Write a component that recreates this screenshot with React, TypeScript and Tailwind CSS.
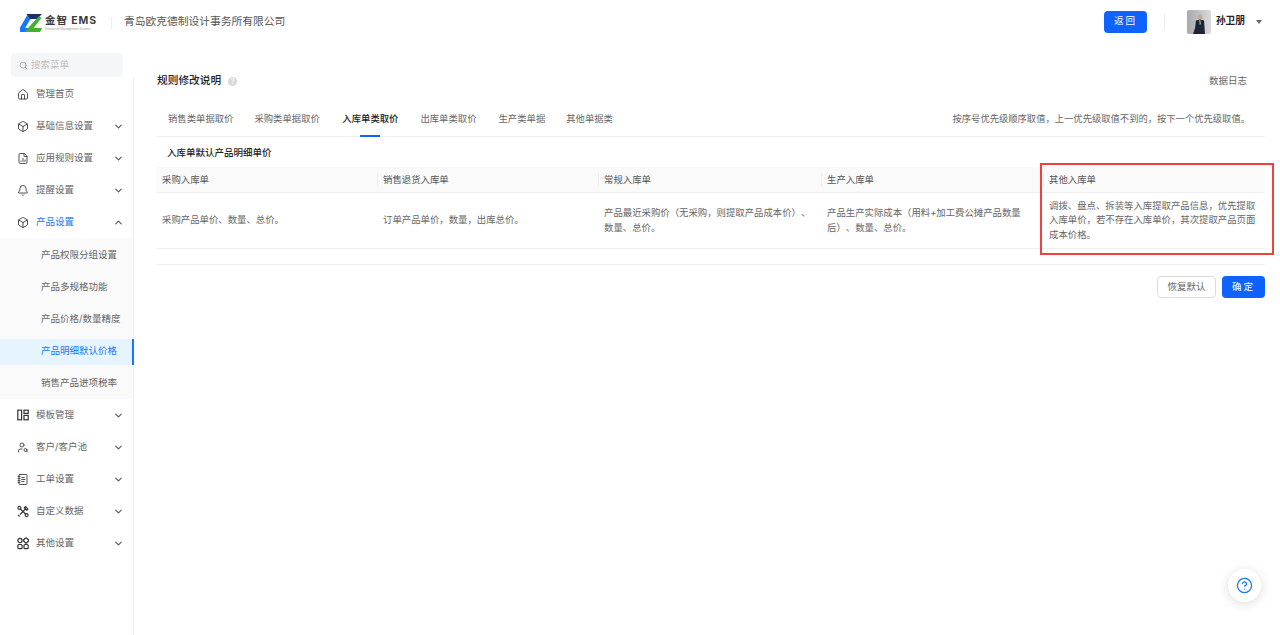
import React from "react";
import { House, Box, FileChartColumn, Bell, ChevronDown, ChevronUp, Search, CircleHelp, UserSearch, NotebookText } from "lucide-react";

const FONT = "font-['Inter','Noto_Sans_CJK_SC',sans-serif]";

function TemplateIcon() {
  return (
    <svg width="12" height="12" viewBox="0 0 12 12" fill="none" stroke="#333" strokeWidth="1.2">
      <rect x="0.8" y="1.2" width="3.8" height="9.6" />
      <rect x="7" y="1.2" width="4.2" height="3.2" />
      <rect x="7" y="6.4" width="4.2" height="4.4" />
    </svg>
  );
}
function CrossToolsIcon() {
  return (
    <svg width="13" height="13" viewBox="0 0 12 12" fill="none" stroke="#333" strokeWidth="1.1">
      <path d="M3 3l6 6M9 3L3 9" />
      <circle cx="2.4" cy="2.4" r="1.5" />
      <circle cx="9.6" cy="9.6" r="1.5" />
      <path d="M8.4 1l2.6 2.6-1.4 1.2L7.2 2.2z" />
      <path d="M1 9.4l1.6 1.6" />
    </svg>
  );
}
function GridIcon() {
  return (
    <svg width="13" height="13" viewBox="0 0 12 12" fill="none" stroke="#333" strokeWidth="1.2">
      <circle cx="3" cy="3" r="2.1" />
      <rect x="7" y="0.9" width="4.2" height="4.2" rx="1" transform="rotate(45 9.1 3)" />
      <rect x="0.9" y="7" width="4.2" height="4.2" rx="1" />
      <rect x="7" y="7" width="4.2" height="4.2" rx="1" />
    </svg>
  );
}
function Logo() {
  return (
    <svg width="22" height="18" viewBox="0 0 22 18">
      <path d="M6.5 0H22L17 5H9.5z" fill="#17306e" />
      <path d="M7 1.5L0 13.5V18h7l3-4H5.2L10.5 5z" fill="#1677ff" />
      <path d="M19 2L8 14l-3 4h15l2-4H13.5L21.5 4z" fill="#45b02a" />
    </svg>
  );
}
function Avatar() {
  return (
    <svg width="24" height="24" viewBox="0 0 24 24">
      <defs>
        <linearGradient id="avatarBg" x1="0" y1="0" x2="1" y2="0">
          <stop offset="0" stopColor="#a8a9ad" />
          <stop offset="1" stopColor="#d9dadc" />
        </linearGradient>
      </defs>
      <rect width="24" height="24" rx="2" fill="url(#avatarBg)" />
      <circle cx="13" cy="7" r="2.4" fill="#c9a992" />
      <path d="M9 10.5L13 9.5L17 10.5L18 24H6L8 18z" fill="#1d2433" />
      <path d="M12.4 10l.8 0 .5 4-.9 1z" fill="#e8e8e8" />
    </svg>
  );
}

type Item = { label: string; icon: React.ReactNode; chevron?: boolean; open?: boolean };
const iconProps = { size: 13, strokeWidth: 1.7, color: "#333" };

const beforeItems: Item[] = [
  { label: "管理首页", icon: <House {...iconProps} /> },
  { label: "基础信息设置", icon: <Box {...iconProps} />, chevron: true },
  { label: "应用规则设置", icon: <FileChartColumn {...iconProps} />, chevron: true },
  { label: "提醒设置", icon: <Bell {...iconProps} />, chevron: true },
  { label: "产品设置", icon: <Box {...iconProps} />, chevron: true, open: true },
];
const afterItems: Item[] = [
  { label: "模板管理", icon: <TemplateIcon />, chevron: true },
  { label: "客户/客户池", icon: <UserSearch {...iconProps} />, chevron: true },
  { label: "工单设置", icon: <NotebookText {...iconProps} />, chevron: true },
  { label: "自定义数据", icon: <CrossToolsIcon />, chevron: true },
  { label: "其他设置", icon: <GridIcon />, chevron: true },
];
const subItems = ["产品权限分组设置", "产品多规格功能", "产品价格/数量精度", "产品明细默认价格", "销售产品进项税率"];

function MenuRow({ item }: { item: Item }) {
  return (
    <div className="h-[32px] flex items-center pl-[17px] pr-[9px]">
      <span className="w-[12px] h-[12px] flex items-center justify-center shrink-0">{item.icon}</span>
      <span className={`ml-[7px] flex-1 text-[9.5px] ${item.open ? "text-[#1677ff]" : "text-[#666]"}`}>{item.label}</span>
      {item.chevron &&
        (item.open ? (
          <ChevronUp size={11} strokeWidth={2.4} color="#555" />
        ) : (
          <ChevronDown size={11} strokeWidth={2.4} color="#555" />
        ))}
    </div>
  );
}

const tabs = [
  { t: "销售类单据取价", c: "" },
  { t: "采购类单据取价", c: "ml-[21px]" },
  { t: "入库单类取价", c: "ml-[22.5px]" },
  { t: "出库单类取价", c: "ml-[22px]" },
  { t: "生产类单据", c: "ml-[22px]" },
  { t: "其他单据类", c: "ml-[21px]" },
];
const cols = [
  { w: "w-[221px]", head: "采购入库单", body: "采购产品单价、数量、总价。" },
  { w: "w-[221px]", head: "销售退货入库单", body: "订单产品单价，数量，出库总价。" },
  { w: "w-[223px]", head: "常规入库单", body: "产品最近采购价（无采购，则提取产品成本价）、数量、总价。" },
  { w: "w-[222px]", head: "生产入库单", body: "产品生产实际成本（用料+加工费公摊产品数量后）、数量、总价。" },
  { w: "flex-1", head: "其他入库单", body: "调拨、盘点、拆装等入库提取产品信息，优先提取入库单价，若不存在入库单价，其次提取产品页面成本价格。" },
];

export default function App() {
  return (
    <div className={`${FONT} [text-spacing-trim:space-all] relative w-[1280px] h-[635px] overflow-hidden bg-white flex flex-col`}>
      <header className="h-[45px] shrink-0 flex items-center pl-[20px] pr-[18px]">
        <Logo />
        <div className="ml-[3px] w-[58px] flex flex-col">
          <span className="text-[10.5px] leading-[13px] font-bold text-[#3c3c3c] tracking-[0.9px] whitespace-nowrap">金智 EMS</span>
          <span className="text-[3px] leading-[4px] text-[#999] whitespace-nowrap">Enterprise Management System</span>
        </div>
        <div className="ml-[8px] w-px h-[12px] bg-[#eee]" />
        <span className="ml-[12px] text-[10.75px] text-[#555]">青岛欧克德制设计事务所有限公司</span>
        <div className="ml-auto flex items-center pb-[2px]">
          <button className="w-[43px] h-[22px] rounded-[4px] bg-[#0f62fe] text-white text-[9.5px] tracking-[2px]">返回</button>
          <div className="ml-[17px] w-px h-[16px] bg-[#eee]" />
          <div className="ml-[22px]"><Avatar /></div>
          <span className="ml-[5px] text-[9.7px] font-semibold text-[#222]">孙卫朋</span>
          <span className="ml-[11px] w-0 h-0 border-x-[3.5px] border-x-transparent border-t-[4px] border-t-[#666]" />
        </div>
      </header>

      <div className="flex-1 flex min-h-0">
        <aside className="w-[134px] shrink-0 flex flex-col">
          <div className="pt-[8px] pl-[11px] pr-[10px]">
            <div className="h-[24px] w-[112px] rounded-[4px] bg-[#f5f6f7] flex items-center pl-[8px] gap-[3px]">
              <Search size={9} color="#999" />
              <span className="text-[9.5px] text-[#c0c0c0]">搜索菜单</span>
            </div>
          </div>
          <nav className="flex-1 border-r border-[#f0f0f0] pt-px">
            {beforeItems.map((i) => <MenuRow key={i.label} item={i} />)}
            <div className="bg-[#fafafa] pt-[2px] h-[161px] flex flex-col justify-center gap-[6px]">
              {subItems.map((s, idx) => (
                <div
                  key={s}
                  className={`h-[26px] flex items-center pl-[41px] text-[9.5px] ${
                    idx === 3 ? "bg-[#e6f4ff] text-[#1677ff] border-r-2 border-[#1677ff] -mr-px" : "text-[#666]"
                  }`}
                >
                  {s}
                </div>
              ))}
            </div>
            {afterItems.map((i) => <MenuRow key={i.label} item={i} />)}
          </nav>
        </aside>

        <main className="flex-1 pl-[22px] pr-[15px] min-w-0">
          <div className="flex items-center h-[30px] mt-[21px]">
            <span className="ml-px text-[10.7px] text-[#222] font-medium">规则修改说明</span>
            <span className="ml-[7px] w-[9px] h-[9px] rounded-full bg-[#d9d9d9] text-white text-[7px] leading-[9px] text-center">?</span>
            <span className="ml-auto mr-[18px] text-[9.5px] text-[#666]">数据日志</span>
          </div>

          <div className="mt-[11px] h-[30px] flex items-start border-b border-[#f0f0f0] pl-[12px]">
            {tabs.map((tab, idx) => (
              <span
                key={tab.t}
                className={`relative h-[30px] pt-[5px] leading-[14px] text-[9.35px] ${
                  idx === 2 ? "text-[#222] font-medium" : "text-[#666]"
                } ${tab.c}`}
              >
                {tab.t}
                {idx === 2 && <span className="absolute left-[18px] bottom-0 w-[20px] h-[2px] bg-[#0f62fe]" />}
              </span>
            ))}
            <span className="ml-auto mr-[15px] pt-[5px] leading-[14px] text-[9.3px] text-[#666]">按序号优先级顺序取值，上一优先级取值不到的，按下一个优先级取值。</span>
          </div>

          <div className="mt-[9px] pl-[11px] h-[13px] leading-[13px] text-[9.5px] font-medium text-[#222]">入库单默认产品明细单价</div>

          <div className="mt-[8px] flex border-b border-[#f0f0f0]">
            {cols.map((c, idx) => (
              <div key={c.head} className={`${c.w} flex flex-col min-w-0`}>
                <div className="h-[26px] bg-[#fafafa] border-b border-[#f0f0f0] flex items-center relative text-[9.4px] text-[#555] pl-[6px] pt-px">
                  {idx > 0 && <span className="absolute left-0 top-[6px] h-[13px] w-px bg-[#eee]" />}
                  <span>{c.head}</span>
                </div>
                <div className={`h-[55px] flex items-center text-[9.4px] leading-[14.5px] text-[#666] ${idx === 4 ? "pl-[6px] pr-[4px]" : idx === 0 ? "pl-[6px] pr-[6px]" : "pl-[6px] pr-[10px]"}`}>
                  {c.body}
                </div>
              </div>
            ))}
          </div>

          <div className="mt-[15px] border-t border-[#f0f0f0] pt-[11px] flex justify-end gap-[6px]">
            <button className="w-[59px] h-[22px] rounded-[4px] border border-[#ddd] bg-white text-[9.5px] text-[#666]">恢复默认</button>
            <button className="w-[43px] h-[22px] rounded-[4px] bg-[#0f62fe] text-white text-[9.5px] tracking-[2px]">确定</button>
          </div>
        </main>
      </div>

      <div className="absolute left-[1040px] top-[163px] w-[234px] h-[92px] border-2 border-[#f04040] pointer-events-none" />

      <div className="absolute left-[1228px] top-[569px] w-[33px] h-[33px] rounded-full bg-white shadow-[0_2px_12px_rgba(0,0,0,0.14)] flex items-center justify-center">
        <CircleHelp size={17} strokeWidth={1.8} color="#1677ff" />
      </div>
    </div>
  );
}
